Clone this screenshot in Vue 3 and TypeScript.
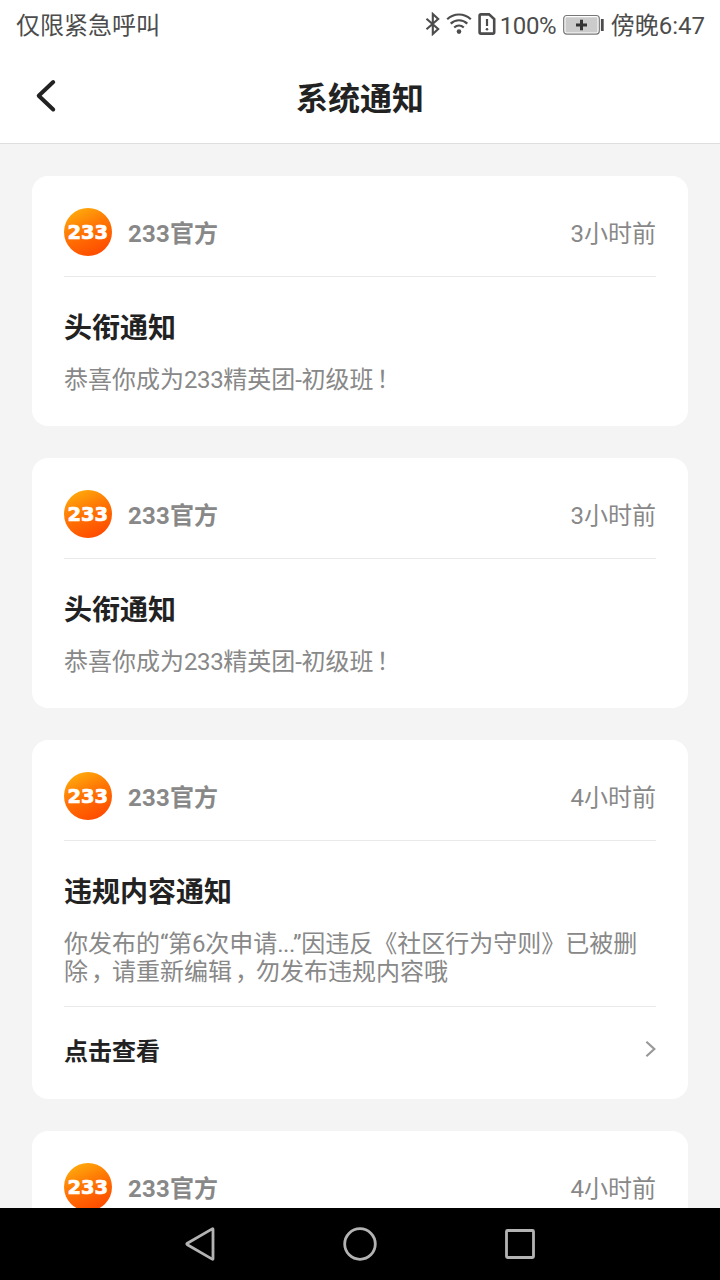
<script setup lang="ts">
interface Notice {
  id: number
  time: string
  title?: string
  body?: string
  action?: string
}

interface Run {
  text: string
  kind: 'han' | 'latin' | 'stop'
}

const notices: Notice[] = [
  { id: 1, time: '3小时前', title: '头衔通知', body: '恭喜你成为233精英团-初级班！' },
  { id: 2, time: '3小时前', title: '头衔通知', body: '恭喜你成为233精英团-初级班！' },
  {
    id: 3,
    time: '4小时前',
    title: '违规内容通知',
    body: '你发布的“第6次申请...”因违反《社区行为守则》已被删除，请重新编辑，勿发布违规内容哦',
    action: '点击查看',
  },
  { id: 4, time: '4小时前' },
]

// Latin runs are tracked tighter and full-width stops sit nearer the middle of their cell.
function runs(body: string): Run[] {
  return body
    .split(/([“”.\d-]+|[，！])/)
    .filter(Boolean)
    .map((text) => ({
      text,
      kind: /^[，！]/.test(text) ? 'stop' : /^[“”.\d-]/.test(text) ? 'latin' : 'han',
    }))
}
</script>

<template>
  <div class="screen" lang="zh-CN">
    <div class="status">
      <span class="carrier">仅限紧急呼叫</span>
      <div class="indicators">
        <svg class="bluetooth" width="16" height="24" viewBox="0 0 16 24">
          <path d="M1.5 6.7 13.2 17 7.8 22V2l5.4 5L1.5 17.3" />
        </svg>
        <svg class="wifi" width="26" height="24" viewBox="0 0 26 24">
          <path d="M1.2 7.3C8 .9 18 .9 24.8 7.3M4.7 11.6c4.8-4.5 11.8-4.5 16.6 0M8.2 15.5c2.8-2.5 6.8-2.5 9.6 0" />
          <circle cx="13" cy="19.6" r="2.3" />
        </svg>
        <svg class="sim" width="18" height="24" viewBox="0 0 18 24">
          <path class="outline" d="M3 2.4h8L16.2 7v13.2q0 1.4-1.4 1.4H3q-1.4 0-1.4-1.4V3.8Q1.6 2.4 3 2.4Z" />
          <path class="mark" d="M9 7v7" />
          <circle cx="9" cy="17.3" r="1.3" />
        </svg>
        <span class="percent">100%</span>
        <svg class="battery" width="42" height="22" viewBox="0 0 42 22">
          <rect class="shell" x=".7" y="1.5" width="35.6" height="18.6" rx="3" />
          <rect class="level" x="2.5" y="3.2" width="32" height="15.2" rx="1" />
          <path class="plus" d="M13 10.9h11M18.5 5.8v10.4" />
          <path class="tip" d="M39.3 5v12" />
        </svg>
        <span class="clock">傍晚6:47</span>
      </div>
    </div>

    <header class="bar">
      <svg class="back" width="24" height="36" viewBox="0 0 24 36">
        <path d="M19.2 4 4.7 17.7 19.2 31.5" />
      </svg>
      <h1>系统通知</h1>
    </header>

    <main class="feed">
      <article v-for="n in notices" :key="n.id" class="card">
        <div class="sender">
          <svg class="logo" width="48" height="48" viewBox="0 0 48 48">
            <defs>
              <linearGradient :id="'flame' + n.id" x1=".12" y1="0" x2=".58" y2="1">
                <stop offset="0" stop-color="#ffb20d" />
                <stop offset=".5" stop-color="#ff7504" />
                <stop offset="1" stop-color="#ff4d00" />
              </linearGradient>
            </defs>
            <circle cx="24" cy="24" r="24" :fill="`url(#flame${n.id})`" />
            <text x="3.4" y="31" textLength="40.6" lengthAdjust="spacingAndGlyphs">233</text>
          </svg>
          <span class="name">233官方</span>
          <span class="time">{{ n.time }}</span>
        </div>
        <h2 v-if="n.title">{{ n.title }}</h2>
        <p v-if="n.body"><span v-for="(r, i) in runs(n.body)" :key="i" :class="r.kind">{{ r.text }}</span></p>
        <div v-if="n.action" class="action">
          <span>{{ n.action }}</span>
          <svg width="12" height="18" viewBox="0 0 12 18">
            <path d="M2.4 1.8 10.3 9 2.4 16.2" />
          </svg>
        </div>
      </article>
    </main>

    <nav class="keys">
      <svg width="36" height="40" viewBox="0 0 36 40">
        <path d="M31 5.3v29.4q0 .8-.8.4L5.4 20.7q-1.2-.7 0-1.4L30.2 4.9q.8-.4.8.4Z" />
      </svg>
      <svg width="36" height="40" viewBox="0 0 36 40"><circle cx="18" cy="20" r="15.3" /></svg>
      <svg width="36" height="40" viewBox="0 0 36 40">
        <rect x="4.5" y="6.5" width="27" height="27" rx="1" />
      </svg>
    </nav>
  </div>
</template>

<style>
html,
body {
  margin: 0;
  overflow: hidden;
}
</style>

<style scoped>
.screen {
  width: 720px;
  height: 1280px;
  display: flex;
  flex-direction: column;
  overflow: hidden;
  background: #f4f4f4;
  color: #222;
  font-family: Roboto, 'Noto Sans CJK SC', sans-serif;
}
svg {
  display: block;
  flex: none;
}
.status {
  box-sizing: border-box;
  flex: none;
  height: 50px;
  padding: 0 15px 0 16px;
  display: flex;
  align-items: center;
  justify-content: space-between;
  background: #fff;
  color: #4c4c4c;
  font-size: 24px;
  line-height: 48px;
  white-space: nowrap;
}
.status span {
  padding-top: 2px;
}
.indicators {
  display: flex;
  align-items: center;
}
.indicators svg {
  fill: none;
  stroke: #4c4c4c;
  stroke-width: 2.2;
}
.indicators circle {
  fill: #4c4c4c;
  stroke: none;
}
.indicators .bluetooth {
  margin: 0 5px 2px 0;
}
.bluetooth path {
  stroke-width: 2.1;
}
.indicators .wifi {
  margin: 0 6px 2px 0;
}
.indicators .sim {
  margin: 0 4px 2px 0;
}
.sim .outline {
  stroke-width: 2.6;
}
.percent {
  width: 56px;
  margin-right: 7px;
  letter-spacing: -0.4px;
}
.battery {
  margin-right: 6px;
}
.indicators .shell {
  stroke: #777;
  stroke-width: 1.2;
}
.indicators .level {
  fill: #cbcbcb;
  stroke: none;
}
.indicators .plus {
  stroke: #333;
  stroke-width: 3;
}
.indicators .tip {
  stroke-width: 2.8;
}
.bar {
  box-sizing: border-box;
  flex: none;
  height: 94px;
  padding: 0 34px;
  display: grid;
  grid-template-columns: 24px 1fr 24px;
  align-items: center;
  border-bottom: 1px solid #dedede;
  background: #fff;
}
.back {
  margin-bottom: 2px;
  fill: none;
  stroke: #222;
  stroke-width: 4;
  stroke-linecap: round;
  stroke-linejoin: round;
}
h1 {
  margin: 4px 0 0;
  text-align: center;
  font-size: 32px;
  line-height: 44px;
  font-weight: 700;
}
.feed {
  flex: 1;
  min-height: 0;
  padding: 32px 32px 0;
  display: flex;
  flex-direction: column;
  gap: 32px;
  overflow: hidden;
}
.card {
  flex: none;
  padding: 32px;
  border-radius: 16px;
  background: #fff;
}
.sender {
  height: 48px;
  padding-bottom: 20px;
  display: flex;
  align-items: center;
  border-bottom: 1px solid #e9e9e9;
  color: #888;
  font-size: 24px;
  line-height: 44px;
}
.logo text {
  fill: #fff;
  stroke: #fff;
  stroke-width: 0.7;
  font: 700 19px 'DejaVu Sans', sans-serif;
}
.name,
.time {
  padding-top: 4px;
}
.name {
  margin-left: 16px;
  font-weight: 700;
  letter-spacing: 0.2px;
}
.time {
  margin-left: auto;
}
h2 {
  margin: 33px 0 0;
  font-size: 28px;
  line-height: 38px;
  font-weight: 700;
}
p {
  margin: 18px 0 0;
  color: #888;
  font-size: 24px;
  line-height: 28px;
}
.latin {
  letter-spacing: -0.4px;
}
.stop {
  padding-left: 3px;
  margin-right: -3px;
}
.action {
  height: 60px;
  margin-top: 20px;
  display: flex;
  align-items: flex-end;
  justify-content: space-between;
  border-top: 1px solid #e9e9e9;
  font-size: 24px;
  line-height: 30px;
  font-weight: 700;
}
.action svg {
  margin-bottom: 9px;
}
.action path {
  fill: none;
  stroke: #999;
  stroke-width: 2.2;
}
.keys {
  flex: none;
  height: 72px;
  display: flex;
  align-items: center;
  justify-content: center;
  gap: 124px;
  background: #000;
}
.keys svg * {
  fill: none;
  stroke: #b3b3b3;
  stroke-width: 2.8;
  stroke-linejoin: round;
}
</style>
